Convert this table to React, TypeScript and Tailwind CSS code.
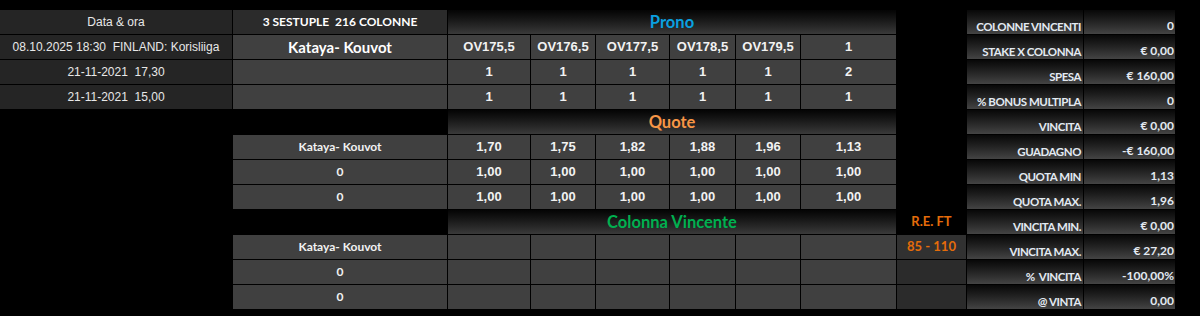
import React from 'react';

const calibri = 'font-["Lato","Roboto",sans-serif] font-bold';
const arial = 'font-["Liberation_Sans","Arial",sans-serif]';

type CellProps = {
  children?: React.ReactNode;
  className?: string;
};

function Cell({ children, className = '' }: CellProps) {
  return (
    <div className={`flex items-center justify-center whitespace-pre ${className}`}>
      {children}
    </div>
  );
}

function Header({ children, color }: { children: React.ReactNode; color: string }) {
  return (
    <Cell
      className={`col-span-6 bg-linear-to-b from-[#050505] to-[#3a3a3a] text-[16.5px] ${calibri} ${color}`}
    >
      {children}
    </Cell>
  );
}

function Blank() {
  return <div className="bg-black" />;
}

const statCell = `flex items-end justify-end bg-linear-to-b from-[#080808] to-[#444444] pb-[2px] leading-none text-[#e3eaf2] whitespace-pre ${calibri}`;

function Stat({ label, value }: { label: string; value: string }) {
  return (
    <>
      <div className={`${statCell} pr-[2px] text-[11.5px] tracking-[-0.04em]`}>{label}</div>
      <div className={`${statCell} pr-[1px] text-[12px]`}>{value}</div>
    </>
  );
}

const stats: [string, string][] = [
  ['COLONNE VINCENTI', '0'],
  ['STAKE X COLONNA', '€ 0,00'],
  ['SPESA', '€ 160,00'],
  ['% BONUS MULTIPLA', '0'],
  ['VINCITA', '€ 0,00'],
  ['GUADAGNO', '-€ 160,00'],
  ['QUOTA MIN', '1,13'],
  ['QUOTA MAX.', '1,96'],
  ['VINCITA MIN.', '€ 0,00'],
  ['VINCITA MAX.', '€ 27,20'],
  ['%  VINCITA', '-100,00%'],
  ['@ VINTA', '0,00'],
];

const prono = ['OV175,5', 'OV176,5', 'OV177,5', 'OV178,5', 'OV179,5', '1'];
const pronoRows = [
  ['1', '1', '1', '1', '1', '2'],
  ['1', '1', '1', '1', '1', '1'],
];
const quote = ['1,70', '1,75', '1,82', '1,88', '1,96', '1,13'];
const ones = ['1,00', '1,00', '1,00', '1,00', '1,00', '1,00'];

const dataCell = `bg-[#404040] text-[13px] text-[#f2f2f2] font-bold ${arial}`;
const leftCell = `bg-[#252525] text-[12px] text-[#e8e8e8] ${arial}`;

export default function App() {
  return (
    <div className="h-[316px] w-full overflow-hidden bg-black">
      <div className="grid w-[1175px] grid-cols-[232px_214px_82px_64px_73px_65px_64px_95px_69px_116px_91px] grid-rows-[repeat(12,24px)] gap-px bg-black pt-[10px]">
        {/* row 0 */}
        <Cell className={leftCell}>Data &amp; ora</Cell>
        <Cell className={`bg-[#2b2b2b] text-[12px] text-white ${calibri}`}>3 SESTUPLE  216 COLONNE</Cell>
        <Header color="text-[#0aa0e0]">Prono</Header>
        <Blank />
        <Stat label={stats[0][0]} value={stats[0][1]} />

        {/* row 1 */}
        <Cell className={leftCell}>08.10.2025 18:30  FINLAND: Korisliiga</Cell>
        <Cell className={`bg-[#404040] text-[15px] text-white ${calibri}`}>Kataya- Kouvot</Cell>
        {prono.map((v, i) => (
          <Cell key={i} className={dataCell}>{v}</Cell>
        ))}
        <Blank />
        <Stat label={stats[1][0]} value={stats[1][1]} />

        {/* rows 2-3 */}
        {pronoRows.map((r, ri) => (
          <React.Fragment key={ri}>
            <Cell className={leftCell}>{ri === 0 ? '21-11-2021  17,30' : '21-11-2021  15,00'}</Cell>
            <Cell className="bg-[#404040]" />
            {r.map((v, i) => (
              <Cell key={i} className={dataCell}>{v}</Cell>
            ))}
            <Blank />
            <Stat label={stats[2 + ri][0]} value={stats[2 + ri][1]} />
          </React.Fragment>
        ))}

        {/* row 4 */}
        <Blank />
        <Blank />
        <Header color="text-[#f79646]">Quote</Header>
        <Blank />
        <Stat label={stats[4][0]} value={stats[4][1]} />

        {/* rows 5-7 */}
        {[quote, ones, ones].map((r, ri) => (
          <React.Fragment key={ri}>
            <Blank />
            <Cell className={`bg-[#404040] text-[12px] text-[#f2f2f2] ${calibri}`}>
              {ri === 0 ? 'Kataya- Kouvot' : '0'}
            </Cell>
            {r.map((v, i) => (
              <Cell key={i} className={dataCell}>{v}</Cell>
            ))}
            <Blank />
            <Stat label={stats[5 + ri][0]} value={stats[5 + ri][1]} />
          </React.Fragment>
        ))}

        {/* row 8 */}
        <Blank />
        <Blank />
        <Header color="text-[#00b050]">Colonna Vincente</Header>
        <Cell className={`bg-black text-[13px] text-[#e46c0a] ${calibri}`}>R.E. FT</Cell>
        <Stat label={stats[8][0]} value={stats[8][1]} />

        {/* rows 9-11 */}
        {[0, 1, 2].map((ri) => (
          <React.Fragment key={ri}>
            <Blank />
            <Cell className={`bg-[#404040] text-[12px] text-[#f2f2f2] ${calibri}`}>
              {ri === 0 ? 'Kataya- Kouvot' : '0'}
            </Cell>
            {[0, 1, 2, 3, 4, 5].map((i) => (
              <Cell key={i} className="bg-[#404040]" />
            ))}
            <Cell className={`${ri === 0 ? 'bg-[#313131]' : 'bg-[#2b2b2b]'} text-[13px] text-[#e46c0a] ${calibri}`}>
              {ri === 0 ? '85 - 110' : ''}
            </Cell>
            <Stat label={stats[9 + ri][0]} value={stats[9 + ri][1]} />
          </React.Fragment>
        ))}
      </div>
    </div>
  );
}
